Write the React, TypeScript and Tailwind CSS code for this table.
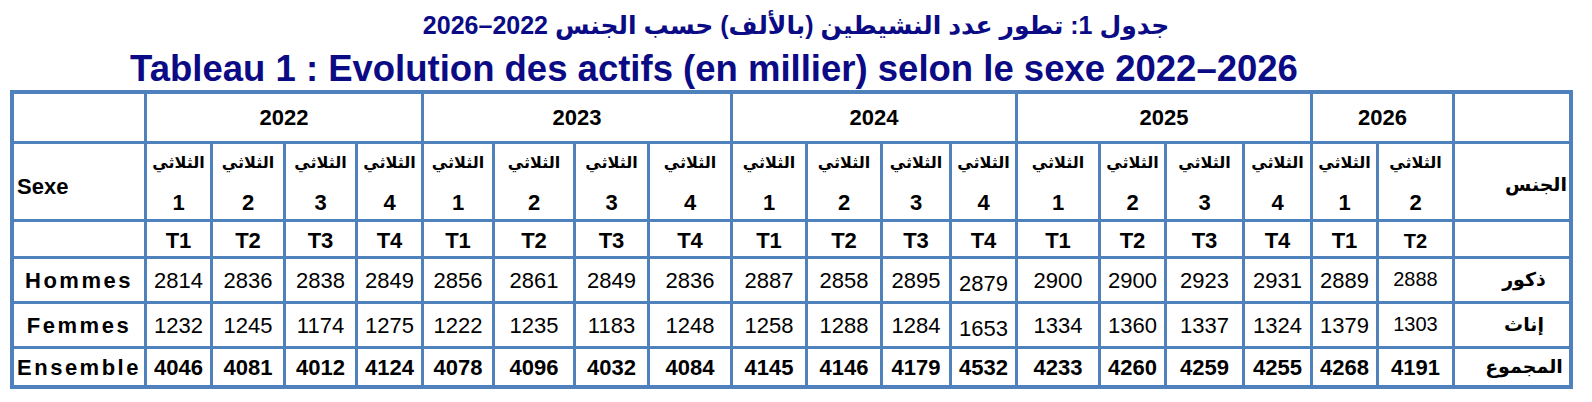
const years = [
  { y: "2022", span: "col-span-4" },
  { y: "2023", span: "col-span-4" },
  { y: "2024", span: "col-span-4" },
  { y: "2025", span: "col-span-4" },
  { y: "2026", span: "col-span-2" },
];

const quarters = [1, 2, 3, 4, 1, 2, 3, 4, 1, 2, 3, 4, 1, 2, 3, 4, 1, 2];

const rows = [
  {
    fr: "Hommes",
    ar: "ذكور",
    bold: false,
    values: [2814, 2836, 2838, 2849, 2856, 2861, 2849, 2836, 2887, 2858, 2895, 2879, 2900, 2900, 2923, 2931, 2889, 2888],
  },
  {
    fr: "Femmes",
    ar: "إناث",
    bold: false,
    values: [1232, 1245, 1174, 1275, 1222, 1235, 1183, 1248, 1258, 1288, 1284, 1653, 1334, 1360, 1337, 1324, 1379, 1303],
  },
  {
    fr: "Ensemble",
    ar: "المجموع",
    bold: true,
    values: [4046, 4081, 4012, 4124, 4078, 4096, 4032, 4084, 4145, 4146, 4179, 4532, 4233, 4260, 4259, 4255, 4268, 4191],
  },
];

const cell = "bg-white flex items-center justify-center";

export default function App() {
  return (
    <div className="w-[1592px] h-[402px] bg-white text-black font-['Liberation_Sans','DejaVu_Sans',sans-serif]">
      <h1
        dir="rtl"
        className="text-center text-[25px] leading-[32px] pt-[9px] font-bold text-[#0b0b85]"
      >
        جدول 1: تطور عدد النشيطين (بالألف) حسب الجنس 2022–2026
      </h1>
      <h2 className="text-center pr-[164px] text-[36.5px] leading-[42px] mt-[7px] font-bold text-[#0b0b85]">
        Tableau 1 : Evolution des actifs (en millier) selon le sexe 2022–2026
      </h2>

      <div className="ml-[10px] w-fit grid grid-cols-[130px_63px_70px_69px_63px_68px_78px_71px_80px_72px_72px_66px_63px_80px_63px_75px_65px_63px_73px_114px] grid-rows-[47px_75px_34px_42px_42px_36px] gap-[3px] p-[4px] bg-[#4f81bd] text-[22px]">
        {/* année */}
        <div className={cell} />
        {years.map((yr) => (
          <div key={yr.y} className={`${cell} ${yr.span} font-bold`}>
            {yr.y}
          </div>
        ))}
        <div className={cell} />

        {/* trimestre */}
        <div className="bg-white flex items-center pl-[3px] font-bold pt-[10px]">Sexe</div>
        {quarters.map((q, i) => (
          <div key={i} className="bg-white flex flex-col items-center justify-start gap-[17px] pt-[8px]">
            <span dir="rtl" className="text-[16px] leading-[22px] font-bold">
              الثلاثي
            </span>
            <span className="font-bold leading-[24px]">{q}</span>
          </div>
        ))}
        <div className="bg-white flex items-center justify-end pr-[2px] pt-[8px]">
          <span dir="rtl" className="text-[19px] font-bold">
            الجنس
          </span>
        </div>

        {/* T1..T4 */}
        <div className={cell} />
        {quarters.map((q, i) => (
          <div key={i} className={`${cell} font-bold pt-[3px] ${i === 17 ? "text-[20px]" : ""}`}>
            T{q}
          </div>
        ))}
        <div className={cell} />

        {/* données */}
        {rows.map((r) => (
          <div key={r.fr} className="contents">
            <div className={`${cell} font-bold tracking-[2.5px]`}>{r.fr}</div>
            {r.values.map((v, i) => (
              <div
                key={i}
                className={`${cell} ${r.bold ? "font-bold" : ""} ${
                  i === 11 && !r.bold ? "pt-[6px]" : ""
                } ${i === 17 && !r.bold ? "text-[20px] pb-[3px]" : ""}`}
              >
                {v}
              </div>
            ))}
            <div className={`${cell} pl-[24px]`}>
              <span dir="rtl" className="text-[19px] font-bold">
                {r.ar}
              </span>
            </div>
          </div>
        ))}
      </div>
    </div>
  );
}
